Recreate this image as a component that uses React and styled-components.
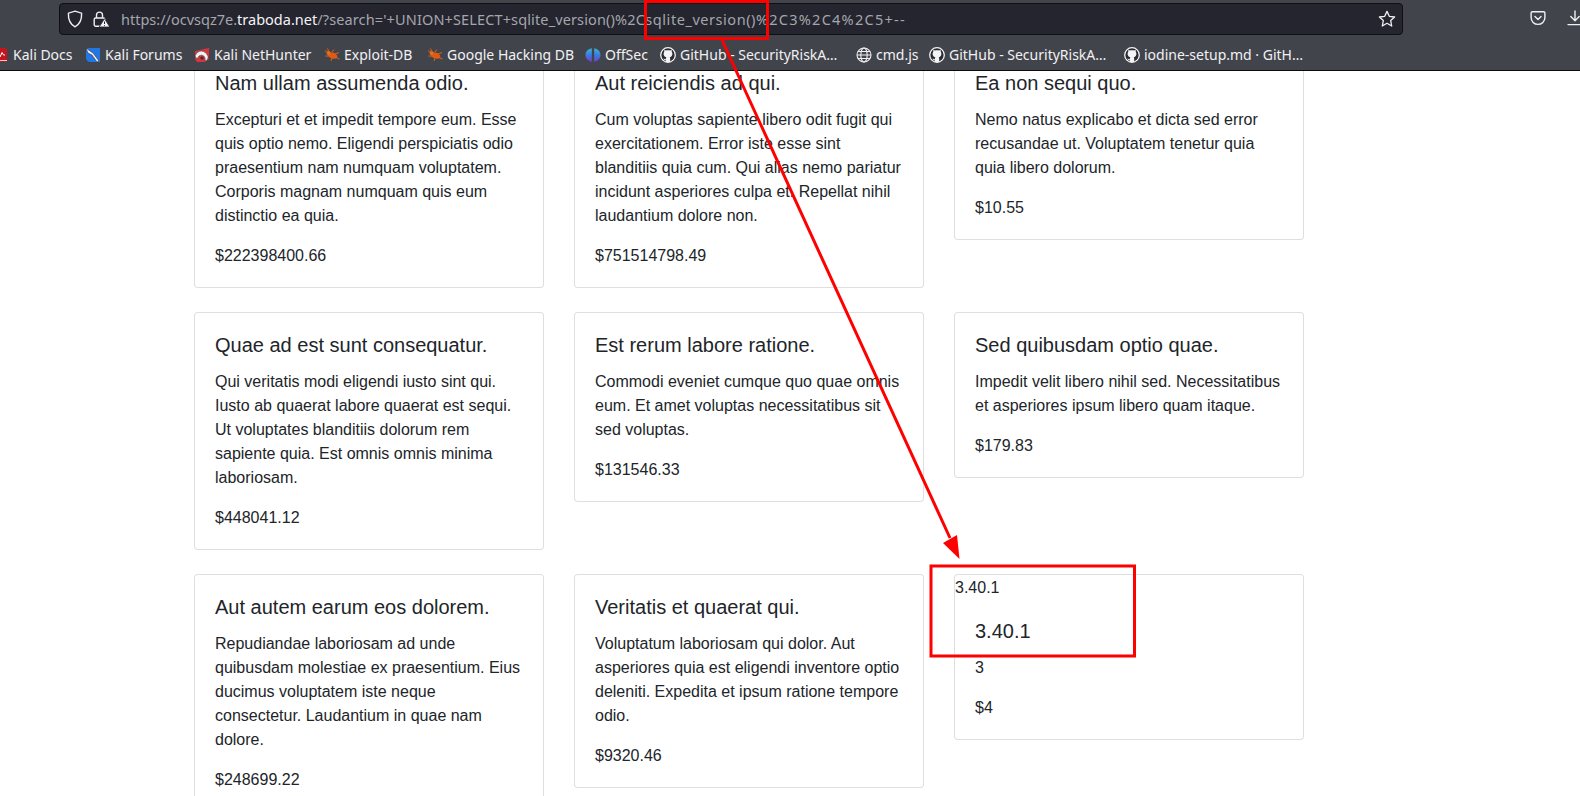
import React from 'react';
import styled, { createGlobalStyle } from 'styled-components';

const Global = createGlobalStyle`
  html, body { margin: 0; padding: 0; height: 100%; overflow: hidden; background: #fff; }
  #root { height: 100%; }
`;

const Page = styled.div`
  position: relative;
  width: 1580px;
  height: 796px;
  overflow: hidden;
  display: flex;
  flex-direction: column;
  font-family: "Liberation Sans", Arial, sans-serif;
  color: #212529;
`;

const Chrome = styled.header`
  position: relative;
  z-index: 2;
  flex: 0 0 71px;
  box-sizing: border-box;
  background: #42444c;
  border-bottom: 1px solid #0c0c0d;
  font-family: "Noto Sans", sans-serif;
  display: flex;
  flex-direction: column;
`;

const UrlRow = styled.div`
  height: 39px;
  box-sizing: border-box;
  padding: 3px 0 0 59px;
  display: flex;
  align-items: flex-start;
`;

const UrlBar = styled.div`
  flex: 0 0 1344px;
  height: 32px;
  box-sizing: border-box;
  background: #24252f;
  border: 1px solid #101014;
  border-radius: 4px;
  display: flex;
  align-items: center;
  padding: 0 6px 0 7px;
  color: #a5a6ac;
  font-size: 14.5px;
  white-space: nowrap;
`;

const UrlIcons = styled.div`
  display: flex;
  align-items: center;
  gap: 9px;
  width: 54px;
  flex: none;
  & svg { display: block; }
`;

const UrlText = styled.div`
  flex: 1;
`;

const UrlPart = styled.span`
  letter-spacing: ${p => p.$ls}px;
`;

const Domain = styled.span`
  color: #f4f4f6;
`;

const ToolIcons = styled.div`
  display: flex;
  align-items: center;
  gap: 21px;
  margin-left: 127px;
  padding-top: 7px;
  flex: none;
`;

const Bookmarks = styled.nav`
  height: 31px;
  display: flex;
  align-items: center;
  margin-left: -7px;
  color: #f1f1f3;
  font-size: 14px;
  white-space: nowrap;
`;

const Bookmark = styled.div`
  flex: 0 0 ${p => p.$w}px;
  display: flex;
  align-items: center;
  gap: 4px;
  & svg { flex: none; display: block; }
`;

const Viewport = styled.main`
  flex: 1;
  overflow: hidden;
  background: #fff;
`;

const Grid = styled.div`
  margin: -21px 0 0 194px;
  width: 1110px;
  display: grid;
  grid-template-columns: repeat(3, 350px);
  column-gap: 30px;
  row-gap: 24px;
  align-items: start;
`;

const Card = styled.article`
  box-sizing: border-box;
  background: #fff;
  border: 1px solid rgba(0, 0, 0, 0.125);
  border-radius: 4px;
  font-size: 16px;
  line-height: 24px;
`;

const CardTop = styled.div`
  box-sizing: border-box;
  height: 24px;
  padding-top: 1px;
`;

const CardBody = styled.div`
  padding: 20px 20px 19px;
`;

const Title = styled.h5`
  margin: 0 0 13px;
  font-size: 20px;
  font-weight: 400;
  line-height: 24px;
`;

const Text = styled.p`
  margin: 0 0 16px;
`;

const Price = styled.p`
  margin: 0;
`;

const Marks = styled.svg`
  position: absolute;
  left: 0;
  top: 0;
  z-index: 3;
  pointer-events: none;
`;

const Shield = () => (
  <svg width="16" height="18" viewBox="0 0 16 18" fill="none" stroke="#f0f0f2" strokeWidth="1.4">
    <path d="M8 1.2 L14.6 3.2 C14.9 9.5 13 14 8 16.8 C3 14 1.1 9.5 1.4 3.2 Z" />
  </svg>
);

const LockWarn = () => (
  <svg width="18" height="18" viewBox="0 0 18 18" fill="none">
    <path d="M4.5 8 V5 C4.5 1.2 10.5 1.2 10.5 5 V8" stroke="#f0f0f2" strokeWidth="1.4" />
    <rect x="2.2" y="8" width="10.6" height="8.2" rx="1.4" stroke="#f0f0f2" strokeWidth="1.4" />
    <path d="M12.5 8.6 L17.8 17 H7.2 Z" fill="#f4f4f6" stroke="#24252f" strokeWidth="0.8" />
    <path d="M12.5 11.5 V14 M12.5 15 V15.8" stroke="#24252f" strokeWidth="1" />
  </svg>
);

const Star = () => (
  <svg width="18" height="18" viewBox="0 0 18 18" fill="none" stroke="#f0f0f2" strokeWidth="1.3" strokeLinejoin="round">
    <path d="M9 1.4 L11.3 6.3 L16.6 7 L12.7 10.6 L13.7 16 L9 13.3 L4.3 16 L5.3 10.6 L1.4 7 L6.7 6.3 Z" />
  </svg>
);

const Pocket = () => (
  <svg width="16" height="16" viewBox="0 0 16 16" fill="none" stroke="#f0f0f2" strokeWidth="1.4" strokeLinecap="round" strokeLinejoin="round">
    <path d="M2.4 1.8 H13.6 C14.4 1.8 14.9 2.3 14.9 3 V7.5 C14.9 11.4 11.8 14.4 8 14.4 C4.2 14.4 1.1 11.4 1.1 7.5 V3 C1.1 2.3 1.6 1.8 2.4 1.8 Z" />
    <path d="M5 6.6 L8 9.5 L11 6.6" />
  </svg>
);

const Download = () => (
  <svg width="16" height="16" viewBox="0 0 16 16" fill="none" stroke="#f0f0f2" strokeWidth="1.4" strokeLinecap="round" strokeLinejoin="round">
    <path d="M8 1 V10.5 M3.8 6.6 L8 10.8 L12.2 6.6 M1 14.6 H15" />
  </svg>
);

const Doc = () => (
  <svg width="16" height="16" viewBox="0 0 16 16">
    <rect x="1" y="1" width="13" height="14" rx="1.5" fill="#c3161c" />
    <path d="M3 9 L6 6.5 L7 10 L9 5.5 L10.5 8 L12 8" fill="none" stroke="#fff" strokeWidth="1" />
    <rect x="1" y="13" width="13" height="1" fill="#f0d0d0" />
  </svg>
);

const Forums = () => (
  <svg width="16" height="16" viewBox="0 0 16 16">
    <path d="M3 1 H15 V15 H5 C3 15 1 13 1 11 V3 Z" fill="#2277e6" />
    <path d="M1 1 L5 4 L8 6 L14 14 L12 15 L7 8 L3 6 Z" fill="#f2f2f2" stroke="#222" strokeWidth="0.5" />
  </svg>
);

const Hunter = () => (
  <svg width="16" height="16" viewBox="0 0 16 16">
    <path d="M1 4 L15 1 V12 L11 15 H3 L1 12 Z" fill="#d8343c" />
    <path d="M1 9 C4 2 11 3 14 9 C14.5 12 13 13.5 11 14 C12 10 9 6.5 5 9 L3 12 Z" fill="#f2f2f2" stroke="#333" strokeWidth="0.5" />
    <circle cx="8" cy="11" r="1.6" fill="#333" />
  </svg>
);

const Bug = () => (
  <svg width="16" height="16" viewBox="0 0 16 16" fill="none">
    <ellipse cx="8.5" cy="8.5" rx="5" ry="3" fill="#e05a12" transform="rotate(20 8.5 8.5)" />
    <circle cx="4.5" cy="6" r="2" fill="#e8701c" />
    <path d="M1 3.5 L4 6 M3.5 1.5 L5 5 M8 5 L10 2.5 M11 7 L15 5.5 M11 10 L15.5 12 M8 11 L7 14 M5 9 L1.5 9" stroke="#d9641a" strokeWidth="1" />
  </svg>
);

const OffSec = () => (
  <svg width="16" height="16" viewBox="0 0 16 16">
    <defs>
      <linearGradient id="os" x1="0" y1="0" x2="0" y2="1">
        <stop offset="0" stopColor="#3ab5d8" />
        <stop offset="0.55" stopColor="#3a78e0" />
        <stop offset="1" stopColor="#7a3bd0" />
      </linearGradient>
    </defs>
    <path d="M6.8 1.2 C2.5 2 .5 5 .5 8 C.5 11 2.5 14 6.8 14.8 Z M9.2 1.2 C13.5 2 15.5 5 15.5 8 C15.5 11 13.5 14 9.2 14.8 Z" fill="url(#os)" />
  </svg>
);

const GitHub = () => (
  <svg width="16" height="16" viewBox="0 0 16 16">
    <circle cx="8" cy="8" r="7.3" fill="#2b2c33" stroke="#f4f4f6" strokeWidth="1.3" />
    <path fill="#f4f4f6" d="M8 3.2 C9 3.2 9.6 3.4 10 3.6 C10.5 3.2 11.2 3 11.6 3.1 C11.9 3.8 11.8 4.5 11.7 4.8 C12.2 5.4 12.4 6 12.4 6.8 C12.4 9.2 11 10 9.6 10.3 C10 10.6 10.2 11.1 10.2 11.8 V15 H5.8 V13.2 C4.2 13.5 3.8 12.6 3.4 11.8 L4.4 11.8 C5 12.5 5.4 12.4 5.8 12.2 C5.8 11.6 6 10.7 6.4 10.3 C5 10 3.6 9.2 3.6 6.8 C3.6 6 3.8 5.4 4.3 4.8 C4.2 4.5 4.1 3.8 4.4 3.1 C4.8 3 5.5 3.2 6 3.6 C6.4 3.4 7 3.2 8 3.2 Z" />
  </svg>
);

const Globe = () => (
  <svg width="16" height="16" viewBox="0 0 16 16" fill="none" stroke="#f0f0f2" strokeWidth="1.1">
    <circle cx="8" cy="8" r="7" />
    <ellipse cx="8" cy="8" rx="3.2" ry="7" />
    <path d="M1 8 H15 M2 4.5 H14 M2 11.5 H14" />
  </svg>
);

const bookmarks = [
  { w: 92, icon: <Doc />, label: 'Kali Docs' },
  { w: 109, icon: <Forums />, label: 'Kali Forums' },
  { w: 130, icon: <Hunter />, label: 'Kali NetHunter' },
  { w: 103, icon: <Bug />, label: 'Exploit-DB' },
  { w: 158, icon: <Bug />, label: 'Google Hacking DB' },
  { w: 75, icon: <OffSec />, label: 'OffSec' },
  { w: 196, icon: <GitHub />, label: 'GitHub - SecurityRiskA…' },
  { w: 73, icon: <Globe />, label: 'cmd.js' },
  { w: 195, icon: <GitHub />, label: 'GitHub - SecurityRiskA…' },
  { w: 200, icon: <GitHub />, label: 'iodine-setup.md · GitH…' },
];

const cards = [
  { t: 'Nam ullam assumenda odio.', b: 'Excepturi et et impedit tempore eum. Esse quis optio nemo. Eligendi perspiciatis odio praesentium nam numquam voluptatem. Corporis magnam numquam quis eum distinctio ea quia.', p: '$222398400.66' },
  { t: 'Aut reiciendis ad qui.', b: 'Cum voluptas sapiente libero odit fugit qui exercitationem. Error iste esse sint blanditiis quia cum. Qui alias nemo pariatur incidunt asperiores culpa et. Repellat nihil laudantium dolore non.', p: '$751514798.49' },
  { t: 'Ea non sequi quo.', b: 'Nemo natus explicabo et dicta sed error recusandae ut. Voluptatem tenetur quia quia libero dolorum.', p: '$10.55' },
  { t: 'Quae ad est sunt consequatur.', b: 'Qui veritatis modi eligendi iusto sint qui. Iusto ab quaerat labore quaerat est sequi. Ut voluptates blanditiis dolorum rem sapiente quia. Est omnis omnis minima laboriosam.', p: '$448041.12' },
  { t: 'Est rerum labore ratione.', b: 'Commodi eveniet cumque quo quae omnis eum. Et amet voluptas necessitatibus sit sed voluptas.', p: '$131546.33' },
  { t: 'Sed quibusdam optio quae.', b: 'Impedit velit libero nihil sed. Necessitatibus et asperiores ipsum libero quam itaque.', p: '$179.83' },
  { t: 'Aut autem earum eos dolorem.', b: 'Repudiandae laboriosam ad unde quibusdam molestiae ex praesentium. Eius ducimus voluptatem iste neque consectetur. Laudantium in quae nam dolore.', p: '$248699.22' },
  { t: 'Veritatis et quaerat qui.', b: 'Voluptatum laboriosam qui dolor. Aut asperiores quia est eligendi inventore optio deleniti. Expedita et ipsum ratione tempore odio.', p: '$9320.46' },
  { top: '3.40.1', t: '3.40.1', b: '3', p: '$4' },
];

export default function App() {
  return (
    <Page>
      <Global />
      <Chrome>
        <UrlRow>
          <UrlBar>
            <UrlIcons>
              <Shield />
              <LockWarn />
            </UrlIcons>
            <UrlText>
              <UrlPart $ls={0}>https://ocvsqz7e.<Domain>traboda.net</Domain></UrlPart>
              <UrlPart $ls={0.13}>/?search='+UNION+SELECT+sqlite_version()%2</UrlPart>
              <UrlPart $ls={0.55}>Csqlite_version()</UrlPart>
              <UrlPart $ls={1.25}>%2C3%2C4%2C5+--</UrlPart>
            </UrlText>
            <Star />
          </UrlBar>
          <ToolIcons>
            <Pocket />
            <Download />
          </ToolIcons>
        </UrlRow>
        <Bookmarks>
          {bookmarks.map((b, i) => (
            <Bookmark key={i} $w={b.w}>
              {b.icon}
              <span>{b.label}</span>
            </Bookmark>
          ))}
        </Bookmarks>
      </Chrome>
      <Viewport>
        <Grid>
          {cards.map((c, i) => (
            <Card key={i}>
              {c.top && <CardTop>{c.top}</CardTop>}
              <CardBody>
                <Title>{c.t}</Title>
                <Text>{c.b}</Text>
                <Price>{c.p}</Price>
              </CardBody>
            </Card>
          ))}
        </Grid>
      </Viewport>
      <Marks width="1580" height="796" viewBox="0 0 1580 796" fill="none">
        <rect x="645.5" y="1.5" width="122" height="37" stroke="#ff0000" strokeWidth="3" />
        <line x1="722" y1="40" x2="950" y2="538" stroke="#ff0000" strokeWidth="3" />
        <path d="M943 543 L957 535 L959.5 559 Z" fill="#ff0000" />
        <rect x="931" y="566" width="203.5" height="90" stroke="#ff0000" strokeWidth="3" />
      </Marks>
    </Page>
  );
}
